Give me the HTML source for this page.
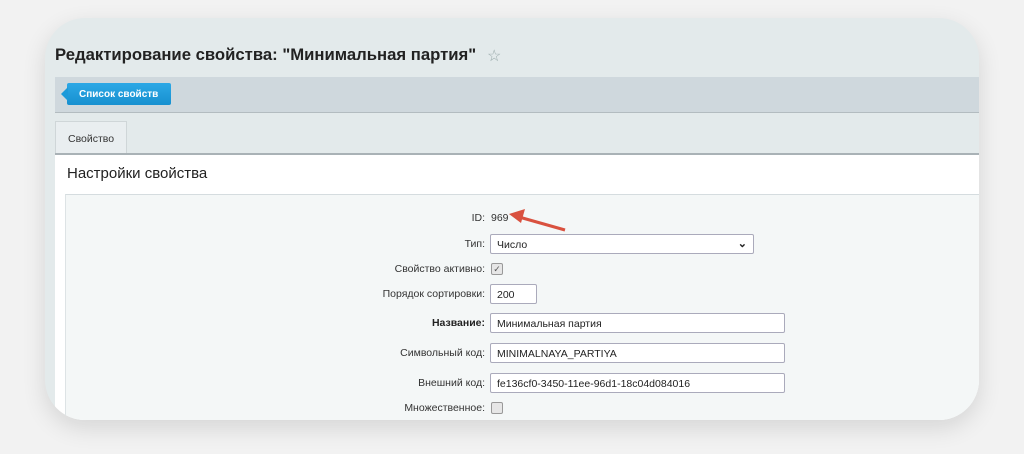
<!DOCTYPE html>
<html><head><meta charset="utf-8"><style>
*{box-sizing:border-box;margin:0;padding:0}
body{width:1024px;height:454px;background:#f2f2f2;font-family:"Liberation Sans",Arial,sans-serif;position:relative;overflow:hidden}
.card{position:absolute;left:45px;top:18px;width:934px;height:402px;border-radius:40px;background:#e3eaeb;overflow:hidden;box-shadow:0 8px 24px rgba(0,0,0,.12)}
.a{position:absolute}
.lbl{position:absolute;right:494px;font-size:10.5px;color:#333;text-align:right;white-space:nowrap}
.inp{position:absolute;left:445px;height:20px;border:1px solid #aab;border-radius:2px;background:#fff;font-size:10.5px;padding:4px 6px;color:#222}
.cb{position:absolute;left:446px;width:12px;height:12px;border:1px solid #999;border-radius:2px;background:#e6e6e6}
</style></head><body>
<div class="card">
<div class="a" style="left:10px;top:27px;font-size:16.7px;font-weight:bold;color:#222">Редактирование свойства: "Минимальная партия"</div>
<div class="a" style="left:442px;top:28px;font-size:16px;color:#9aa">☆</div>
<div class="a" style="left:10px;top:59px;width:924px;height:36px;background:#cfd8dd;border-bottom:1px solid #b3bcc0"></div>
<div class="a" style="left:22px;top:65px;width:104px;height:22px;background:linear-gradient(#2ca8e6,#1790d0);border-radius:2px;color:#fff;font-size:10px;font-weight:bold;line-height:23px;padding-left:12px">Список свойств</div>
<div class="a" style="left:16px;top:69px;width:0;height:0;border-top:7px solid transparent;border-bottom:7px solid transparent;border-right:7px solid #1c9ad9"></div>
<div class="a" style="left:10px;top:103px;width:72px;height:33px;background:#e9eef0;border:1px solid #cfd6d8;border-bottom:none;font-size:10.5px;color:#333;padding:11px 0 0 12px">Свойство</div>
<div class="a" style="left:10px;top:135px;width:924px;height:2px;background:#a9b2b6"></div>
<div class="a" style="left:10px;top:137px;width:924px;height:300px;background:#fff"></div>
<div class="a" style="left:22px;top:147px;font-size:15px;color:#222">Настройки свойства</div>
<div class="a" style="left:20px;top:176px;width:914px;height:260px;background:#f4f7f7;border-top:1px solid #d5dcdf;border-left:1px solid #dde3e5"></div>
<div class="lbl" style="top:194px">ID:</div>
<div class="a" style="left:446px;top:194px;font-size:10.5px;color:#333">969</div>
<svg class="a" style="left:460px;top:188px" width="62" height="28"><path d="M60 24 L14 11" stroke="#d9513f" stroke-width="3"/><path d="M4 8 L20 3 L16 17 Z" fill="#d9513f"/></svg>
<div class="lbl" style="top:220px">Тип:</div>
<div class="inp" style="top:216px;width:264px">Число<span style="position:absolute;right:6px;top:2px;font-size:11px;font-weight:bold">⌄</span></div>
<div class="lbl" style="top:245px">Свойство активно:</div>
<div class="cb" style="top:245px;font-size:9px;line-height:10px;color:#555;text-align:center">✓</div>
<div class="lbl" style="top:270px">Порядок сортировки:</div>
<div class="inp" style="top:266px;width:47px">200</div>
<div class="lbl" style="top:299px;font-weight:bold;color:#222">Название:</div>
<div class="inp" style="top:295px;width:295px">Минимальная партия</div>
<div class="lbl" style="top:329px">Символьный код:</div>
<div class="inp" style="top:325px;width:295px">MINIMALNAYA_PARTIYA</div>
<div class="lbl" style="top:359px">Внешний код:</div>
<div class="inp" style="top:355px;width:295px">fe136cf0-3450-11ee-96d1-18c04d084016</div>
<div class="lbl" style="top:384px">Множественное:</div>
<div class="cb" style="top:384px"></div>
</div>
</body></html>
